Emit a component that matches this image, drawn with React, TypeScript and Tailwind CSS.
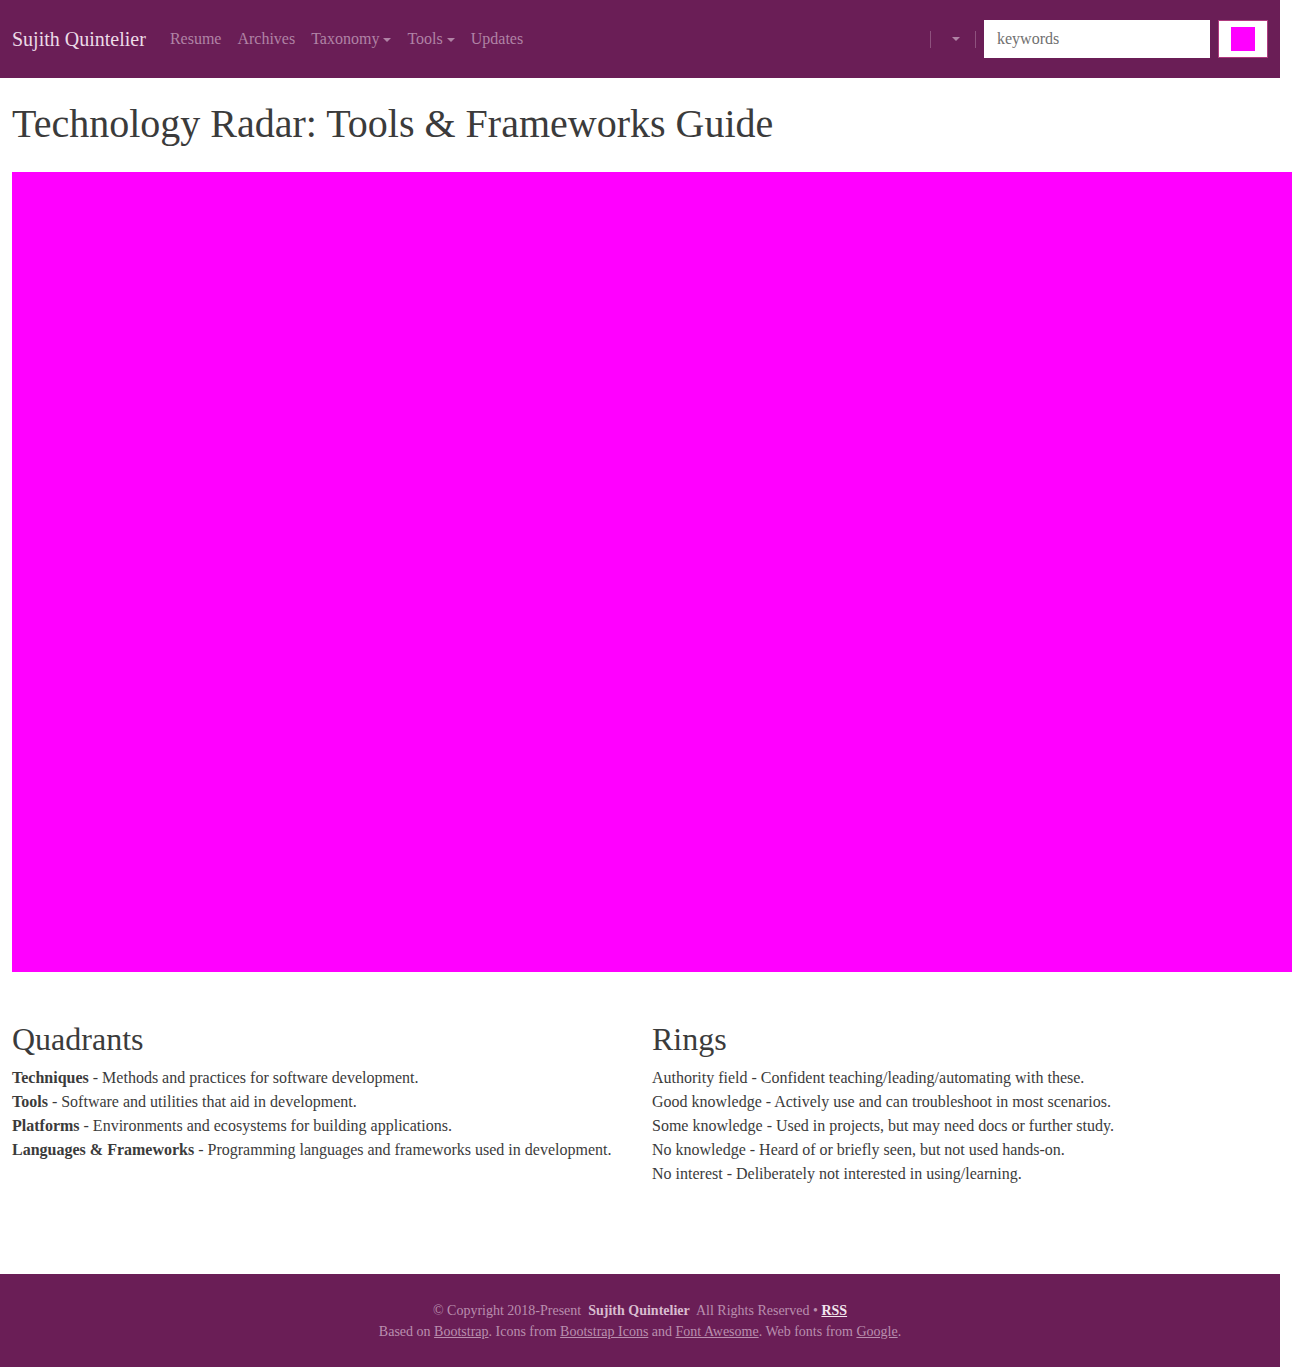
import React from "react";

const font = { fontFamily: '"Liberation Serif", "Times New Roman", serif' };

function Caret() {
  return (
    <span className="ml-[4px] inline-block h-0 w-0 border-x-[4px] border-t-[4px] border-x-transparent border-t-[#b083a5] align-middle" />
  );
}

const quadrants = [
  { name: "Techniques", text: "Methods and practices for software development." },
  { name: "Tools", text: "Software and utilities that aid in development." },
  { name: "Platforms", text: "Environments and ecosystems for building applications." },
  {
    name: "Languages & Frameworks",
    text: "Programming languages and frameworks used in development.",
  },
];

const rings = [
  "Authority field - Confident teaching/leading/automating with these.",
  "Good knowledge - Actively use and can troubleshoot in most scenarios.",
  "Some knowledge - Used in projects, but may need docs or further study.",
  "No knowledge - Heard of or briefly seen, but not used hands-on.",
  "No interest - Deliberately not interested in using/learning.",
];

export default function App() {
  return (
    <div className="w-[1280px] bg-white text-[#3b3b3b]" style={font}>
      <nav className="flex h-[78px] items-center bg-[#6a1e56] px-[12px]">
        <a className="mr-[16px] text-[20px] text-[#ecdbe7]">Sujith Quintelier</a>
        <ul className="flex items-center text-[16px] text-[#b083a5]">
          <li className="px-[8px]">Resume</li>
          <li className="px-[8px]">Archives</li>
          <li className="px-[8px]">
            Taxonomy
            <Caret />
          </li>
          <li className="px-[8px]">
            Tools
            <Caret />
          </li>
          <li className="px-[8px]">Updates</li>
        </ul>
        <div className="ml-auto flex items-center">
          <span className="h-[17px] w-px bg-[#8e527e]" />
          <span className="flex w-[44px] justify-center pl-[5px]">
            <span className="inline-block h-0 w-0 border-x-[4px] border-t-[4px] border-x-transparent border-t-[#b083a5]" />
          </span>
          <span className="h-[17px] w-px bg-[#8e527e]" />
          <input
            className="ml-[8px] h-[38px] w-[226px] bg-white px-[13px] text-[16px] text-[#333] outline-none placeholder:text-[#6f6f6f]"
            placeholder="keywords"
            style={font}
          />
          <button className="ml-[8px] flex h-[38px] w-[50px] items-center justify-center border border-[#b03a7f] bg-white">
            <span className="h-[24px] w-[24px] bg-[#ff00ff]" />
          </button>
        </div>
      </nav>

      <main className="px-[12px]">
        <h1 className="mt-[22px] text-[40px] leading-[48px]">
          Technology Radar: Tools &amp; Frameworks Guide
        </h1>
        <div className="mt-[24px] h-[800px] w-[1280px] bg-[#ff00ff]" />
      </main>

      <section className="mt-[48px] grid grid-cols-2">
        <div className="px-[12px]">
          <h2 className="mb-[8px] text-[32px] leading-[38px]">Quadrants</h2>
          {quadrants.map((q) => (
            <p key={q.name} className="text-[16px] leading-[24px]">
              <strong>{q.name}</strong> - {q.text}
            </p>
          ))}
        </div>
        <div className="px-[12px]">
          <h2 className="mb-[8px] text-[32px] leading-[38px]">Rings</h2>
          {rings.map((r) => (
            <p key={r} className="text-[16px] leading-[24px]">
              {r}
            </p>
          ))}
        </div>
      </section>

      <footer className="mt-[88px] h-[93px] bg-[#6a1e56] pt-[26px] text-center text-[14px] leading-[21px] text-[#b98eae]">
        <p>
          © Copyright 2018-Present&nbsp;{" "}
          <strong className="text-[#d8bccf]">Sujith Quintelier</strong>&nbsp; All Rights
          Reserved •{" "}
          <a className="font-bold text-[#f2e6ee] underline">RSS</a>
        </p>
        <p>
          Based on <a className="underline">Bootstrap</a>. Icons from{" "}
          <a className="underline">Bootstrap Icons</a> and{" "}
          <a className="underline">Font Awesome</a>. Web fonts from{" "}
          <a className="underline">Google</a>.
        </p>
      </footer>
    </div>
  );
}
